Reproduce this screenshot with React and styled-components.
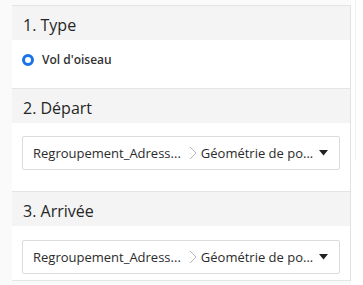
import React from 'react';
import styled, { createGlobalStyle } from 'styled-components';

const GlobalStyle = createGlobalStyle`
  html, body {
    margin: 0;
    padding: 0;
    background: #fafafa;
    font-family: "Open Sans", "Noto Sans", sans-serif;
    color: #222;
  }
`;

const Page = styled.div`
  display: flex;
  height: 285px;
  padding-left: 12px;
  padding-top: 5px;
  box-sizing: border-box;
`;

const Panel = styled.div`
  width: 338px;
  align-self: flex-start;
  background: #fff;
  border-top: 1px solid #e4e4e4;
  border-right: 1px solid #e2e2e2;
  border-bottom: 1px solid #e6e6e6;
`;

const Side = styled.div`
  flex: 1;
  background: #fff;
  margin-top: -5px;
  border-left: 2px solid #fff;
  position: relative;
  &::after {
    content: '';
    position: absolute;
    left: 2px;
    top: 0;
    height: 160px;
    width: 1px;
    background: #efefef;
  }
`;

const Section = styled.section`
  & + & {
    border-top: 1px solid #e4e4e4;
  }
`;

const Header = styled.div`
  height: 34px;
  box-sizing: border-box;
  display: flex;
  align-items: center;
  padding: 3px 0 0 11px;
  background: #f4f4f4;
  font-size: 16px;
  color: #262626;
`;

const Body = styled.div`
  height: ${p => p.$height}px;
  box-sizing: border-box;
  padding: ${p => p.$top}px 10px 0;
  display: flex;
  align-items: flex-start;
`;

const RadioRow = styled.label`
  display: flex;
  align-items: center;
  height: 17px;
`;

const Radio = styled.span`
  width: 12px;
  height: 12px;
  box-sizing: border-box;
  border-radius: 50%;
  border: 3.5px solid #1a73e8;
  background: #fff;
  margin-right: 8px;
`;

const RadioLabel = styled.span`
  font-size: 12px;
  font-weight: 600;
  color: #333;
`;

const Select = styled.div`
  width: 100%;
  height: 34px;
  box-sizing: border-box;
  border: 1px solid #dcdcdc;
  border-radius: 2px;
  display: flex;
  align-items: center;
  padding-left: 10px;
  font-size: 13px;
  color: #2b2b2b;
  background: #fff;
`;

const Part = styled.span`
  white-space: nowrap;
`;

const Sep = styled.svg`
  margin: 0 4px 0 8px;
`;

const Caret = styled.svg`
  margin-left: 6px;
`;

const Picker = () => (
  <Select>
    <Part>Regroupement_Adress...</Part>
    <Sep width="8" height="14" viewBox="0 0 8 14">
      <path d="M1 1 L7 7 L1 13" fill="none" stroke="#b5b5b5" strokeWidth="1" />
    </Sep>
    <Part>Géométrie de po...</Part>
    <Caret width="9" height="6" viewBox="0 0 9 6">
      <path d="M0 0 H9 L4.5 5.5 Z" fill="#222" />
    </Caret>
  </Select>
);

export default function App() {
  return (
    <>
      <GlobalStyle />
      <Page>
        <Panel>
          <Section>
            <Header>1. Type</Header>
            <Body $height={48} $top={11}>
              <RadioRow>
                <Radio />
                <RadioLabel>Vol d'oiseau</RadioLabel>
              </RadioRow>
            </Body>
          </Section>
          <Section>
            <Header>2. Départ</Header>
            <Body $height={68} $top={13}>
              <Picker />
            </Body>
          </Section>
          <Section>
            <Header>3. Arrivée</Header>
            <Body $height={54} $top={14}>
              <Picker />
            </Body>
          </Section>
        </Panel>
        <Side />
      </Page>
    </>
  );
}
